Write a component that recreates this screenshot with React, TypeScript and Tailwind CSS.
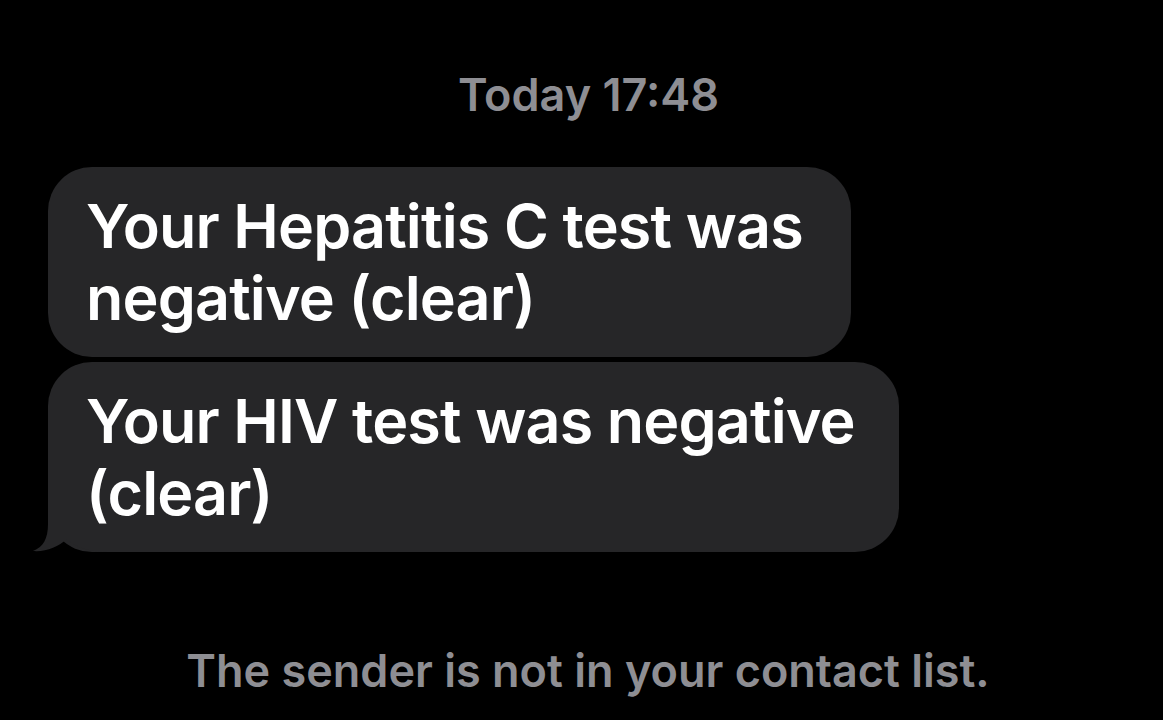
import React from "react";

const font = { fontFamily: "Inter, 'Noto Sans', sans-serif" };

function Tail() {
  return (
    <svg
      className="absolute"
      style={{ left: -20, bottom: 0 }}
      width="80"
      height="53"
      viewBox="0 0 80 53"
    >
      <path
        d="M20,0 L20,25 C20,40 15,48 5,52 C18,53 30,48 39,40 C48,48 60,53 80,53 L80,0 Z"
        fill="#262628"
      />
    </svg>
  );
}

export default function App() {
  return (
    <div
      className="w-[1163px] h-[720px] bg-black overflow-hidden flex flex-col"
      style={font}
    >
      <div className="pt-[69px] pl-[14px] text-center text-[45px] leading-[52px] font-semibold text-[#8e8e93]">
        Today 17:48
      </div>
      <div className="mt-[46px] pl-[48px] flex flex-col gap-[5px] items-start">
        <div className="w-[803px] rounded-[44px] bg-[#262628] pl-[38px] py-[23px] text-white text-[61px] leading-[72px] font-semibold whitespace-nowrap tracking-[-0.85px]">
          Your Hepatitis C test was
          <br />
          negative (clear)
        </div>
        <div className="relative w-[851px] rounded-[44px] bg-[#262628] pl-[38px] py-[23px] text-white text-[61px] leading-[72px] font-semibold whitespace-nowrap tracking-[-0.85px]">
          <Tail />
          <span className="relative">
            Your HIV test was negative
            <br />
            (clear)
          </span>
        </div>
      </div>
      <div className="mt-[93px] pl-[13px] text-center text-[45px] leading-[52px] font-semibold text-[#8e8e93]">
        The sender is not in your contact list.
      </div>
    </div>
  );
}
